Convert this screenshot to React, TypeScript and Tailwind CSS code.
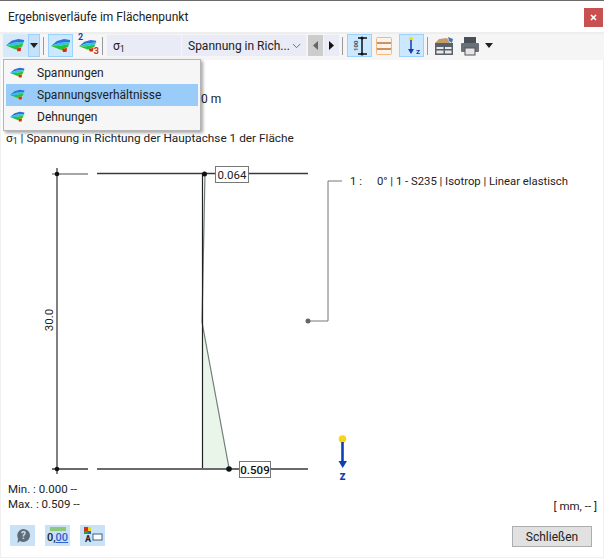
import React from 'react';
import { ChevronDown } from 'lucide-react';

const font = 'font-["Roboto","Open_Sans",sans-serif]';

const StressIcon: React.FC<{ size?: number }> = ({ size = 20 }) => (
  <svg width={size} height={size * 0.75} viewBox="0 0 20 15">
    <path d="M0 8 L6 3 L13 1 L19 2 L19 4 L8 5 Z" fill="#2f6fd8" />
    <path d="M0 8 L8 5 L19 4 L18 6 L8 8 Z" fill="#27c7e0" />
    <path d="M0 8 L8 8 L18 6 L17 9 L10 12 Z" fill="#25c23a" />
    <path d="M10 12 L17 9 L16 11 L12 13 Z" fill="#e8d820" />
    <path d="M11 11 L16 10 L15.5 14 L12 14 Z" fill="#d2301f" />
  </svg>
);

const ToolButton: React.FC<{ active?: boolean; className?: string; children: React.ReactNode }> = ({
  active,
  className = '',
  children,
}) => (
  <div
    className={`flex h-[23px] items-center justify-center border ${
      active ? 'border-[#99d1ff] bg-[#cce8ff]' : 'border-transparent'
    } ${className}`}
  >
    {children}
  </div>
);

const Separator = () => <div className="mx-[3px] h-[18px] w-[1px] bg-[#999999]" />;

const Caret = () => (
  <svg width="8" height="5" viewBox="0 0 8 5">
    <path d="M0 0 H8 L4 5 Z" fill="#222" />
  </svg>
);

const MenuItem: React.FC<{ label: string; active?: boolean }> = ({ label, active }) => (
  <div className={`flex h-[22px] items-center pl-[4px] ${active ? 'bg-[#99ccf9]' : ''}`}>
    <StressIcon size={15} />
    <span className="ml-[12px] text-[12px] text-[#222]">{label}</span>
  </div>
);

const Chart = () => (
  <svg width="604" height="330" viewBox="0 150 604 330" className="block overflow-visible">
    <path d="M205 173 L202 322 L229 468 L202 468 Z" fill="#e8f5e8" />
    <path d="M205 173 L202 322 L229 468" fill="none" stroke="#6f7f76" strokeWidth="1.2" />
    <path d="M202.5 173 V468" stroke="#222" strokeWidth="1.2" />
    <path d="M57 168 V474" stroke="#808080" strokeWidth="2" />
    <path d="M52 174 H88" stroke="#888" strokeWidth="1.6" />
    <path d="M97 173.5 H308 M52 469 H88 M97 469 H308" stroke="#3a3a3a" strokeWidth="1.6" />
    <circle cx="57" cy="174" r="2.3" fill="#111" />
    <circle cx="57" cy="469" r="2.3" fill="#111" />
    <circle cx="204.5" cy="174" r="2.5" fill="#111" />
    <circle cx="229" cy="469" r="2.8" fill="#111" />

    <rect x="215.5" y="166.5" width="33" height="16" fill="#fff" stroke="#777" strokeWidth="1" />
    <text x="232" y="178.5" textAnchor="middle" fontSize="11.5" fill="#222">0.064</text>
    <rect x="239.5" y="461.5" width="31" height="16" fill="#fff" stroke="#777" strokeWidth="1" />
    <text x="255" y="473.5" textAnchor="middle" fontSize="11.5" fontWeight="500" fill="#111">0.509</text>

    <text x="0" y="0" transform="translate(53 320) rotate(-90)" textAnchor="middle" fontSize="11.5" fill="#222">30.0</text>

    <path d="M342 181 H328 V321 H308" fill="none" stroke="#777" strokeWidth="1" />
    <circle cx="308" cy="321" r="2.5" fill="#666" />
    <text x="350" y="185" fontSize="11.3" fill="#222">1 :</text>
    <text x="377" y="185" fontSize="11.3" fill="#222">0° | 1 - S235 | Isotrop | Linear elastisch</text>

    <circle cx="342.5" cy="439" r="3.8" fill="#f7d51d" />
    <path d="M342.5 442 V462" stroke="#0f3fb0" strokeWidth="2.6" />
    <path d="M338.5 461 H347 L342.7 468 Z" fill="#0f3fb0" />
    <text x="342.5" y="480" textAnchor="middle" fontSize="12" fontWeight="700" fill="#0f3fb0">z</text>
  </svg>
);

export default function App() {
  return (
    <div className={`${font} relative flex h-[558px] w-[604px] flex-col overflow-hidden border-t border-t-[#6b6b6b] bg-white text-[#222]`}>
      <div className="flex h-[31px] items-center justify-between pl-[8px] pr-[1px]">
        <span className="text-[12px]">Ergebnisverläufe im Flächenpunkt</span>
        <div className="mt-[2px] flex h-[19px] w-[19px] items-center justify-center bg-[#c75050]">
          <svg width="7" height="7" viewBox="0 0 7 7">
            <path d="M1 1 L6 6 M6 1 L1 6" stroke="#fff" strokeWidth="1.6" />
          </svg>
        </div>
      </div>

      <div className="flex h-[28px] items-center border-t-2 border-[#eeeeee] bg-[#f5f5f5] pb-[3px] pl-[3px] text-[12px]">
        <ToolButton active className="w-[25px] !border-[#d5e9f8] !bg-[#d5e9f8]">
          <StressIcon size={19} />
        </ToolButton>
        <ToolButton active className="w-[12px] !bg-[#c6e2fa]">
          <Caret />
        </ToolButton>
        <Separator />
        <ToolButton active className="ml-[1px] w-[25px]">
          <StressIcon size={20} />
        </ToolButton>
        <ToolButton className="ml-[4px] w-[22px]">
          <div className="relative">
            <StressIcon size={18} />
            <span className="absolute -left-[1px] -top-[6px] text-[9px] font-bold leading-none text-[#1f3fa8]">2</span>
            <span className="absolute -bottom-[4px] -right-[2px] text-[9px] font-bold leading-none text-[#c8322a]">3</span>
          </div>
        </ToolButton>
        <Separator />
        <div className="ml-[1px] flex h-[21px] w-[74px] items-center bg-[#e9ebf6] pl-[6px]">
          <span>σ<sub>1</sub></span>
        </div>
        <div className="ml-[1px] flex h-[21px] w-[124px] items-center justify-between bg-[#e9ebf6] pl-[6px] pr-[3px]">
          <span className="whitespace-nowrap">Spannung in Rich...</span>
          <ChevronDown size={14} strokeWidth={1.5} className="text-[#555]" />
        </div>
        <div className="ml-[2px] flex h-[21px] w-[15px] items-center justify-center bg-[#cccccc]">
          <svg width="5" height="9" viewBox="0 0 5 9"><path d="M5 0 V9 L0 4.5 Z" fill="#666" /></svg>
        </div>
        <div className="ml-[1px] flex h-[21px] w-[15px] items-center justify-center bg-[#e9ebf6]">
          <svg width="5" height="9" viewBox="0 0 5 9"><path d="M0 0 V9 L5 4.5 Z" fill="#111" /></svg>
        </div>
        <Separator />
        <ToolButton active className="ml-[1px] w-[25px]">
          <svg width="18" height="20" viewBox="0 0 18 20">
            <path d="M7 2 H16 M7 18 H16" stroke="#111" strokeWidth="1.3" />
            <path d="M11 2 V18" stroke="#111" strokeWidth="1.5" />
            <circle cx="11" cy="2" r="1.5" fill="#111" />
            <circle cx="11" cy="18" r="1.5" fill="#111" />
            <text x="0" y="0" transform="translate(7 15) rotate(-90)" fontSize="6" fontWeight="700" fill="#444">100</text>
          </svg>
        </ToolButton>
        <ToolButton className="ml-[4px] w-[16px] !border-0">
          <svg width="16" height="18" viewBox="0 0 16 18">
            <rect x="0.5" y="0.5" width="15" height="17" rx="1" fill="#fdf3ea" stroke="#f5b77e" />
            <path d="M1 6 H15 M1 12 H15" stroke="#b5763e" strokeWidth="1.5" />
          </svg>
        </ToolButton>
        <ToolButton active className="ml-[7px] w-[25px]">
          <svg width="20" height="20" viewBox="0 0 20 20">
            <circle cx="9" cy="3" r="2" fill="#f7d51d" />
            <path d="M9 4 V15" stroke="#0f3fb0" strokeWidth="1.5" />
            <path d="M6 13 H12 L9 18 Z" fill="#0f3fb0" />
            <text x="14" y="18" fontSize="8" fontWeight="700" fill="#0f3fb0">z</text>
          </svg>
        </ToolButton>
        <Separator />
        <div className="ml-[4px] flex w-[18px] items-center justify-center">
          <svg width="18" height="20" viewBox="0 0 18 20">
            <rect x="0" y="7" width="18" height="12" fill="#58606a" />
            <rect x="1.5" y="11" width="7" height="2" fill="#e8e8e8" />
            <rect x="10" y="11" width="6.5" height="2" fill="#e8e8e8" />
            <rect x="1.5" y="14.5" width="7" height="3" fill="#e8e8e8" />
            <rect x="10" y="14.5" width="6.5" height="3" fill="#e8e8e8" />
            <path d="M0 7 L4 3 L12 2 L15 7 Z" fill="#c79a6a" />
            <path d="M13 1 L18 3 L17 7 L14 5 Z" fill="#3f76b8" />
          </svg>
        </div>
        <div className="ml-[8px] flex w-[18px] items-center justify-center">
          <svg width="18" height="20" viewBox="0 0 18 20">
            <rect x="3" y="1" width="12" height="6" fill="#4a5058" />
            <rect x="0" y="7" width="18" height="9" rx="1" fill="#6a7078" />
            <rect x="4" y="12" width="10" height="7" fill="#e6e6e6" stroke="#555" />
          </svg>
        </div>
        <div className="ml-[6px] flex items-center">
          <Caret />
        </div>
      </div>

      <div className="flex flex-1 flex-col border-x border-b border-[#f0f0f0]">
        <div className="pl-[200px] pt-[31px] text-[12px] leading-[16px]">0 m</div>
        <div className="pl-[5px] pt-[23px] text-[11.8px] leading-[16px]">
          σ<sub>1</sub> | Spannung in Richtung der Hauptachse 1 der Fläche
        </div>
        <div className="-ml-[1px] mt-[4px]">
          <Chart />
        </div>
        <div className="mt-[2px] flex items-start justify-between pl-[7px] pr-[6px] text-[11.5px] leading-[15px]">
          <div>
            <div>Min. : 0.000 --</div>
            <div>Max. : 0.509 --</div>
          </div>
          <div className="mt-[17px]">[ mm, -- ]</div>
        </div>
        <div className="mt-[11px] flex items-start justify-between pl-[9px] pr-[11px]">
          <div className="flex gap-[10px]">
            <div className="flex h-[21px] w-[25px] items-center justify-center bg-[#c9e2f7]">
              <svg width="16" height="16" viewBox="0 0 16 16">
                <path d="M8.5 1 A6.5 6.5 0 1 1 5 13 L2.5 15 L3 10.5 A6.5 6.5 0 0 1 8.5 1 Z" fill="#5f6b75" />
                <text x="8.5" y="11" textAnchor="middle" fontSize="10" fontWeight="700" fill="#c9e2f7">?</text>
              </svg>
            </div>
            <div className="flex h-[21px] w-[25px] flex-col items-center justify-center bg-[#c9e2f7]">
              <div className="h-[4px] w-[16px] bg-[#8fc77a]" />
              <div className="text-[11px] font-medium leading-[13px] text-[#222]">
                0,<span className="text-[#2f5fd0] underline">00</span>
              </div>
            </div>
            <div className="flex h-[21px] w-[25px] items-center justify-center bg-[#c9e2f7]">
              <svg width="20" height="20" viewBox="0 0 20 20">
                <rect x="1" y="1" width="4" height="4" fill="#d2301f" />
                <rect x="5" y="1" width="3" height="4" fill="#e8d820" />
                <rect x="1" y="5" width="4" height="3" fill="#25a23a" />
                <rect x="5" y="5" width="3" height="3" fill="#2f5fd0" />
                <rect x="10" y="8" width="9" height="6" fill="#fff" stroke="#44627f" />
                <text x="5" y="16" textAnchor="middle" fontSize="9" fontWeight="700" fill="#222">A</text>
              </svg>
            </div>
          </div>
          <div className="mt-[1px] flex h-[21px] w-[80px] items-center justify-center border border-[#adadad] bg-[#e1e1e1] text-[12px]">
            Schließen
          </div>
        </div>
      </div>

      <div className="absolute left-[3px] top-[58px] w-[198px] border border-[#b5b5b5] bg-[#f6f6f6] p-[2px] shadow-[2px_2px_3px_rgba(0,0,0,0.35)]">
        <MenuItem label="Spannungen" />
        <MenuItem label="Spannungsverhältnisse" active />
        <MenuItem label="Dehnungen" />
      </div>
    </div>
  );
}
